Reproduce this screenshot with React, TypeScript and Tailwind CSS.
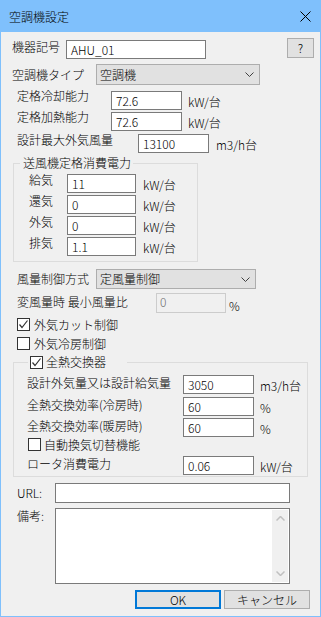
import React from "react";

const font = "font-['Noto_Sans_CJK_JP',sans-serif]";

function TextBox({ value, className = "" }: { value: string; className?: string }) {
  return (
    <div
      className={`flex h-[19px] items-center border border-[#7a7a7a] bg-white pl-[4px] text-[12px] leading-[14px] ${className}`}
    >
      {value}
    </div>
  );
}

function Chevron() {
  return (
    <svg width="9" height="5" viewBox="0 0 9 5" className="shrink-0">
      <polyline points="0.5,0.5 4.5,4.5 8.5,0.5" fill="none" stroke="#404040" strokeWidth="1" />
    </svg>
  );
}

function Select({ value, className = "" }: { value: string; className?: string }) {
  return (
    <div
      className={`flex items-center justify-between border border-[#adadad] bg-[#e1e1e1] pl-[3px] pr-[5px] ${className}`}
    >
      <span>{value}</span>
      <Chevron />
    </div>
  );
}

function CheckBox({ checked }: { checked: boolean }) {
  return (
    <div className="flex h-[13px] w-[13px] shrink-0 items-center justify-center border border-[#333333] bg-white">
      {checked && (
        <svg width="11" height="11" viewBox="0 0 11 11">
          <polyline points="1.5,5.5 4,8.5 9.5,1.5" fill="none" stroke="#333333" strokeWidth="1.2" />
        </svg>
      )}
    </div>
  );
}

function Unit({ children, className = "" }: { children: React.ReactNode; className?: string }) {
  return <span className={`mt-[4px] ${className}`}>{children}</span>;
}

export default function App() {
  return (
    <div
      className={`flex h-[617px] w-[321px] flex-col border border-[#7fc0fc] bg-[#f0f0f0] text-[12px] font-light leading-[14px] text-black ${font}`}
    >
      {/* title bar */}
      <div className="flex h-[31px] shrink-0 items-center justify-between bg-[#7fc0fc] pl-[8px] pr-[9px]">
        <span className="text-[12px]">空調機設定</span>
        <svg width="11" height="11" viewBox="0 0 11 11">
          <path d="M0.5 0.5 L10.5 10.5 M10.5 0.5 L0.5 10.5" stroke="#000" strokeWidth="1" />
        </svg>
      </div>

      <div className="flex flex-col">
        {/* 機器記号 */}
        <div className="mt-[6px] flex h-[20px] items-start pl-[11px] pr-[6px]">
          <span className="mt-[2px] w-[54px]">機器記号</span>
          <TextBox value="AHU_01" className="mt-[2px] h-[18px] w-[140px]" />
          <div className="ml-auto flex h-[20px] w-[27px] items-center justify-center border border-[#adadad] bg-[#e1e1e1]">
            ?
          </div>
        </div>

        {/* 空調機タイプ */}
        <div className="mt-[6px] flex h-[21px] items-center pl-[11px]">
          <span className="w-[84px]">空調機タイプ</span>
          <Select value="空調機" className="h-[21px] w-[164px]" />
        </div>

        {/* 定格冷却能力 */}
        <div className="mt-[6px] flex h-[19px] items-start pl-[16px]">
          <span className="-mt-[2px] w-[94px]">定格冷却能力</span>
          <TextBox value="72.6" className="w-[71px]" />
          <Unit className="ml-[6px]">kW/台</Unit>
        </div>

        {/* 定格加熱能力 */}
        <div className="mt-[2px] flex h-[19px] items-start pl-[16px]">
          <span className="-mt-[2px] w-[94px]">定格加熱能力</span>
          <TextBox value="72.6" className="w-[71px]" />
          <Unit className="ml-[6px]">kW/台</Unit>
        </div>

        {/* 設計最大外気風量 */}
        <div className="mt-[3px] flex h-[19px] items-start pl-[16px]">
          <span className="-mt-[1px] w-[121px]">設計最大外気風量</span>
          <TextBox value="13100" className="w-[71px]" />
          <Unit className="ml-[7px] mt-[1px]">m3/h台</Unit>
        </div>

        {/* 送風機定格消費電力 */}
        <fieldset className="ml-[12px] mt-[3px] w-[185px] border border-[#dcdcdc] pb-[5px]">
          <legend className="ml-[6px] pl-[3px] pr-[2px] leading-[14px]">送風機定格消費電力</legend>
          <div className="mt-[4px] flex flex-col gap-[2px] pl-[15px]">
            {[
              ["給気", "11"],
              ["還気", "0"],
              ["外気", "0"],
              ["排気", "1.1"],
            ].map(([label, value]) => (
              <div key={label} className="flex h-[19px] items-start">
                <span className="-mt-[1px] w-[38px]">{label}</span>
                <TextBox value={value} className="w-[69px]" />
                <Unit className="ml-[7px]">kW/台</Unit>
              </div>
            ))}
          </div>
        </fieldset>

        {/* 風量制御方式 */}
        <div className="mt-[7px] flex h-[20px] items-center pl-[16px]">
          <span className="w-[79px]">風量制御方式</span>
          <Select value="定風量制御" className="h-[20px] w-[160px]" />
        </div>

        {/* 変風量時 最小風量比 */}
        <div className="mt-[4px] flex h-[20px] items-start pl-[16px]">
          <span className="mt-[2px] w-[139px]">変風量時 最小風量比</span>
          <div className="h-[20px] w-[70px] border border-[#cccccc] bg-[#f0f0f0] pl-[3px] pt-[1px] text-[#6d6d6d]">
            0
          </div>
          <Unit className="ml-[3px] mt-[6px]">%</Unit>
        </div>

        {/* checkboxes */}
        <div className="mt-[5px] flex h-[13px] items-center gap-[4px] pl-[16px]">
          <CheckBox checked />
          <span>外気カット制御</span>
        </div>
        <div className="mt-[6px] flex h-[13px] items-center gap-[4px] pl-[16px]">
          <CheckBox checked={false} />
          <span>外気冷房制御</span>
        </div>

        {/* 全熱交換器 */}
        <fieldset className="ml-[12px] mt-[5px] w-[295px] border border-[#dcdcdc] pb-[1px]">
          <legend className="ml-[14px] w-[99px]">
            <div className="flex h-[14px] items-center gap-[3px] pl-[2px]">
              <CheckBox checked />
              <span>全熱交換器</span>
            </div>
          </legend>
          <div className="mt-[6px] flex flex-col pl-[13px]">
            <div className="flex h-[19px] items-start">
              <span className="mt-[1px] w-[156px]">設計外気量又は設計給気量</span>
              <TextBox value="3050" className="w-[71px]" />
              <Unit className="ml-[6px] mt-[3px]">m3/h台</Unit>
            </div>
            <div className="mt-[3px] flex h-[19px] items-start">
              <span className="mt-[1px] w-[156px]">全熱交換効率(冷房時)</span>
              <TextBox value="60" className="w-[71px]" />
              <Unit className="ml-[6px] mt-[0px]">%</Unit>
            </div>
            <div className="mt-[2px] flex h-[19px] items-start">
              <span className="mt-[1px] w-[156px]">全熱交換効率(暖房時)</span>
              <TextBox value="60" className="w-[71px]" />
              <Unit className="ml-[6px] -mt-[1px]">%</Unit>
            </div>
            <div className="mt-[1px] flex h-[13px] items-center gap-[3px] pl-[1px]">
              <CheckBox checked={false} />
              <span>自動換気切替機能</span>
            </div>
            <div className="mt-[5px] flex h-[19px] items-start">
              <span className="mt-[1px] w-[156px]">ロータ消費電力</span>
              <TextBox value="0.06" className="w-[71px]" />
              <Unit className="ml-[6px] mt-[3px]">kW/台</Unit>
            </div>
          </div>
        </fieldset>

        {/* URL */}
        <div className="mt-[6px] flex h-[20px] items-center pl-[16px]">
          <span className="w-[38px]">URL:</span>
          <div className="h-[20px] w-[235px] border border-[#7a7a7a] bg-white" />
        </div>

        {/* 備考 */}
        <div className="mt-[5px] flex h-[76px] items-start pl-[16px]">
          <span className="mt-[1px] w-[38px]">備考:</span>
          <div className="flex h-[76px] w-[235px] justify-end border border-[#7a7a7a] bg-white p-px">
            <div className="flex w-[16px] flex-col items-center justify-between bg-[#f0f0f0] py-[6px]">
              <svg width="9" height="5" viewBox="0 0 9 5">
                <polyline points="0.5,4.5 4.5,0.5 8.5,4.5" fill="none" stroke="#c0c0c0" strokeWidth="1.5" />
              </svg>
              <svg width="9" height="5" viewBox="0 0 9 5">
                <polyline points="0.5,0.5 4.5,4.5 8.5,0.5" fill="none" stroke="#c0c0c0" strokeWidth="1.5" />
              </svg>
            </div>
          </div>
        </div>

        {/* buttons */}
        <div className="mt-[6px] flex h-[19px] gap-[3px] pl-[134px]">
          <div className="flex w-[86px] items-center justify-center border-2 border-[#0078d7] bg-[#e1e1e1]">
            OK
          </div>
          <div className="flex w-[86px] items-center justify-center border border-[#adadad] bg-[#e1e1e1]">
            キャンセル
          </div>
        </div>
      </div>
    </div>
  );
}
